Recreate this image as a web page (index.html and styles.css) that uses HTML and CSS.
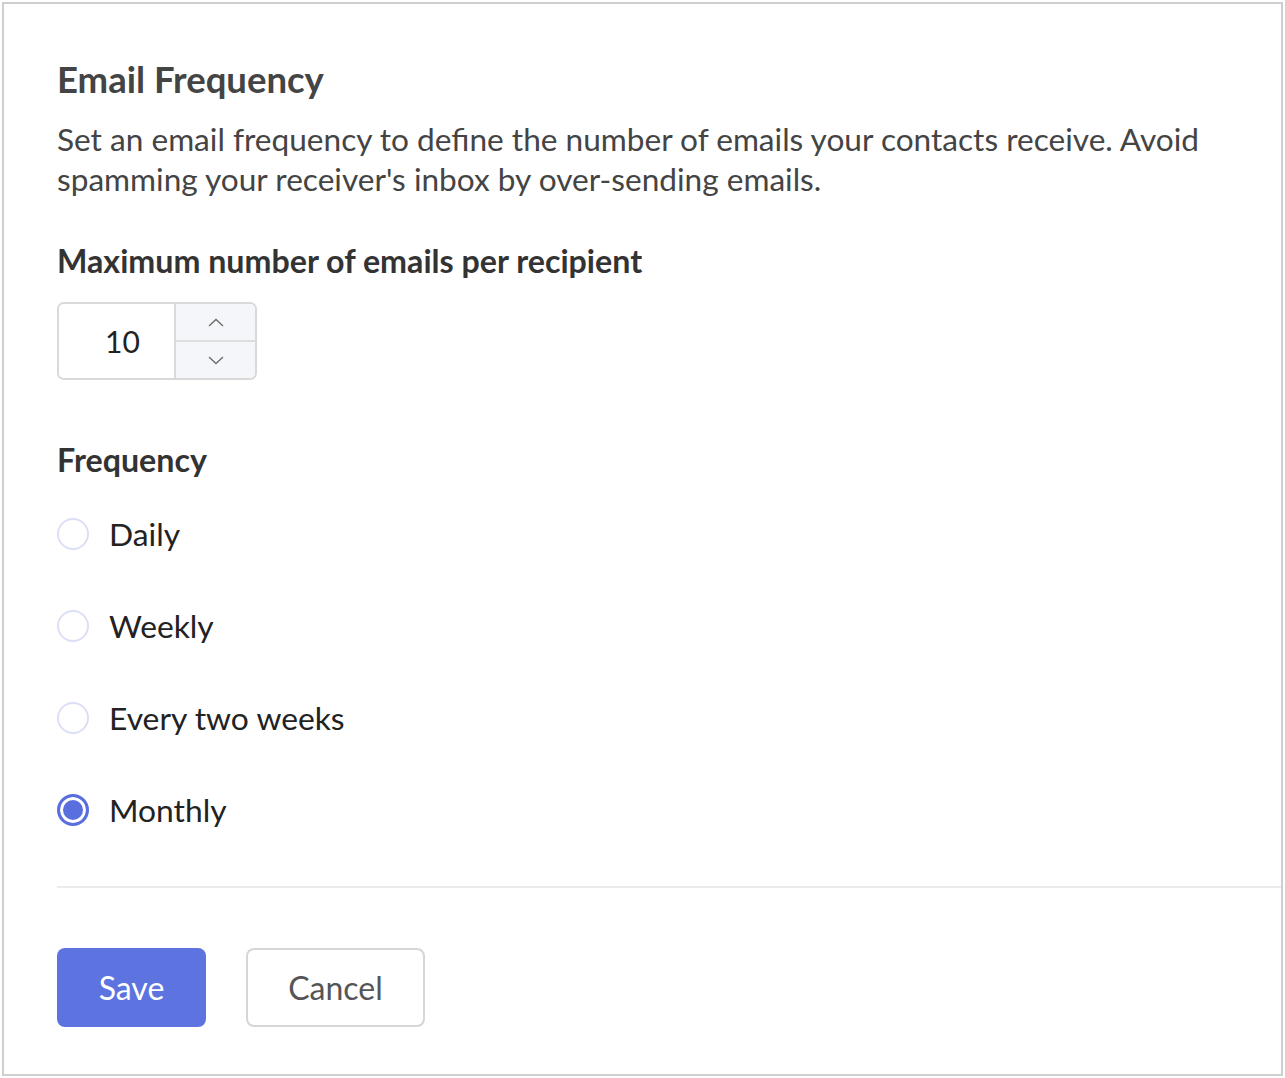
FILE: index.html
```html
<!DOCTYPE html>
<html lang="en">
<head>
    <meta charset="UTF-8">
    <meta name="viewport" content="width=device-width, initial-scale=1.0">
    <title>Email Frequency</title>
    <link rel="stylesheet" href="styles.css">
</head>
<body>
    <div class="panel">
        <div class="content">
            <h2 class="title">Email Frequency</h2>
            <p class="desc">Set an email frequency to define the number of emails your contacts receive. Avoid spamming your receiver's inbox by over-sending emails.</p>

            <div class="field-label">Maximum number of emails per recipient</div>
            <div class="stepper">
                <input type="text" class="stepper-value" value="10">
                <div class="stepper-btns">
                    <button class="step-btn" aria-label="Increase">
                        <svg width="16" height="9" viewBox="0 0 16 9"><path d="M1 8 L8 1.5 L15 8" fill="none" stroke="#6b6b6b" stroke-width="1.3"/></svg>
                    </button>
                    <button class="step-btn" aria-label="Decrease">
                        <svg width="16" height="9" viewBox="0 0 16 9"><path d="M1 1 L8 7.5 L15 1" fill="none" stroke="#6b6b6b" stroke-width="1.3"/></svg>
                    </button>
                </div>
            </div>

            <div class="field-label freq-label">Frequency</div>
            <div class="radio-list">
                <label class="radio-row"><span class="radio"></span>Daily</label>
                <label class="radio-row"><span class="radio"></span>Weekly</label>
                <label class="radio-row"><span class="radio"></span>Every two weeks</label>
                <label class="radio-row"><span class="radio checked"></span>Monthly</label>
            </div>
        </div>

        <div class="divider"></div>

        <div class="actions">
            <button class="btn btn-primary">Save</button>
            <button class="btn btn-secondary">Cancel</button>
        </div>
    </div>
</body>
</html>
```

FILE: styles.css
```css
body {
    font-family: Lato, 'Open Sans', sans-serif;
    background-color: #fff;
    margin: 0;
    padding: 2px;
}
.panel {
    box-sizing: border-box;
    width: 1281px;
    height: 1074px;
    border: 2px solid #cfcfcf;
    background-color: #fff;
}
.content {
    padding: 53px 40px 0 53px;
}
.title {
    margin: 0 0 18px;
    font-size: 36.5px;
    line-height: 44px;
    font-weight: 700;
    color: #444;
}
.desc {
    margin: 0;
    font-size: 31.6px;
    line-height: 40px;
    color: #444;
}
.field-label {
    margin-top: 42px;
    font-size: 32.2px;
    line-height: 40px;
    font-weight: 700;
    color: #333;
}
.stepper {
    display: flex;
    width: 200px;
    height: 78px;
    margin-top: 21px;
    box-sizing: border-box;
    border: 2px solid #d9d9d9;
    border-radius: 7px;
    overflow: hidden;
}
.stepper-value {
    width: 117px;
    box-sizing: border-box;
    border: none;
    border-right: 2px solid #d9d9d9;
    padding: 0 0 0 12px;
    font-family: inherit;
    font-size: 30px;
    color: #222;
    text-align: center;
    outline: none;
}
.stepper-btns {
    flex: 1;
    display: flex;
    flex-direction: column;
    background-color: #f5f6fa;
}
.step-btn {
    flex: 1;
    display: flex;
    align-items: center;
    justify-content: center;
    padding: 0;
    border: none;
    background: none;
    cursor: pointer;
}
.step-btn + .step-btn {
    border-top: 2px solid #dedede;
}
.freq-label {
    margin-top: 60px;
}
.radio-list {
    display: flex;
    flex-direction: column;
    gap: 52px;
    margin-top: 34px;
}
.radio-row {
    display: flex;
    align-items: center;
    gap: 20px;
    height: 40px;
    font-size: 31.8px;
    line-height: 40px;
    color: #222;
    cursor: pointer;
}
.radio {
    box-sizing: border-box;
    width: 32px;
    height: 32px;
    border: 2px solid #dcdff6;
    border-radius: 50%;
    background-color: #fff;
}
.radio.checked {
    border: 3px solid #5a6fde;
    background-color: #5a6fde;
    box-shadow: inset 0 0 0 3px #fff;
}
.divider {
    margin: 56px 0 0 53px;
    height: 2px;
    background-color: #ebebeb;
}
.actions {
    display: flex;
    gap: 40px;
    padding: 60px 0 0 53px;
}
.btn {
    box-sizing: border-box;
    height: 79px;
    border-radius: 8px;
    font-family: inherit;
    font-size: 32px;
    cursor: pointer;
}
.btn-primary {
    width: 149px;
    border: none;
    background-color: #5c73e0;
    color: #fff;
}
.btn-secondary {
    width: 179px;
    border: 2px solid #d6d6d6;
    background-color: #fff;
    color: #555;
}
```
